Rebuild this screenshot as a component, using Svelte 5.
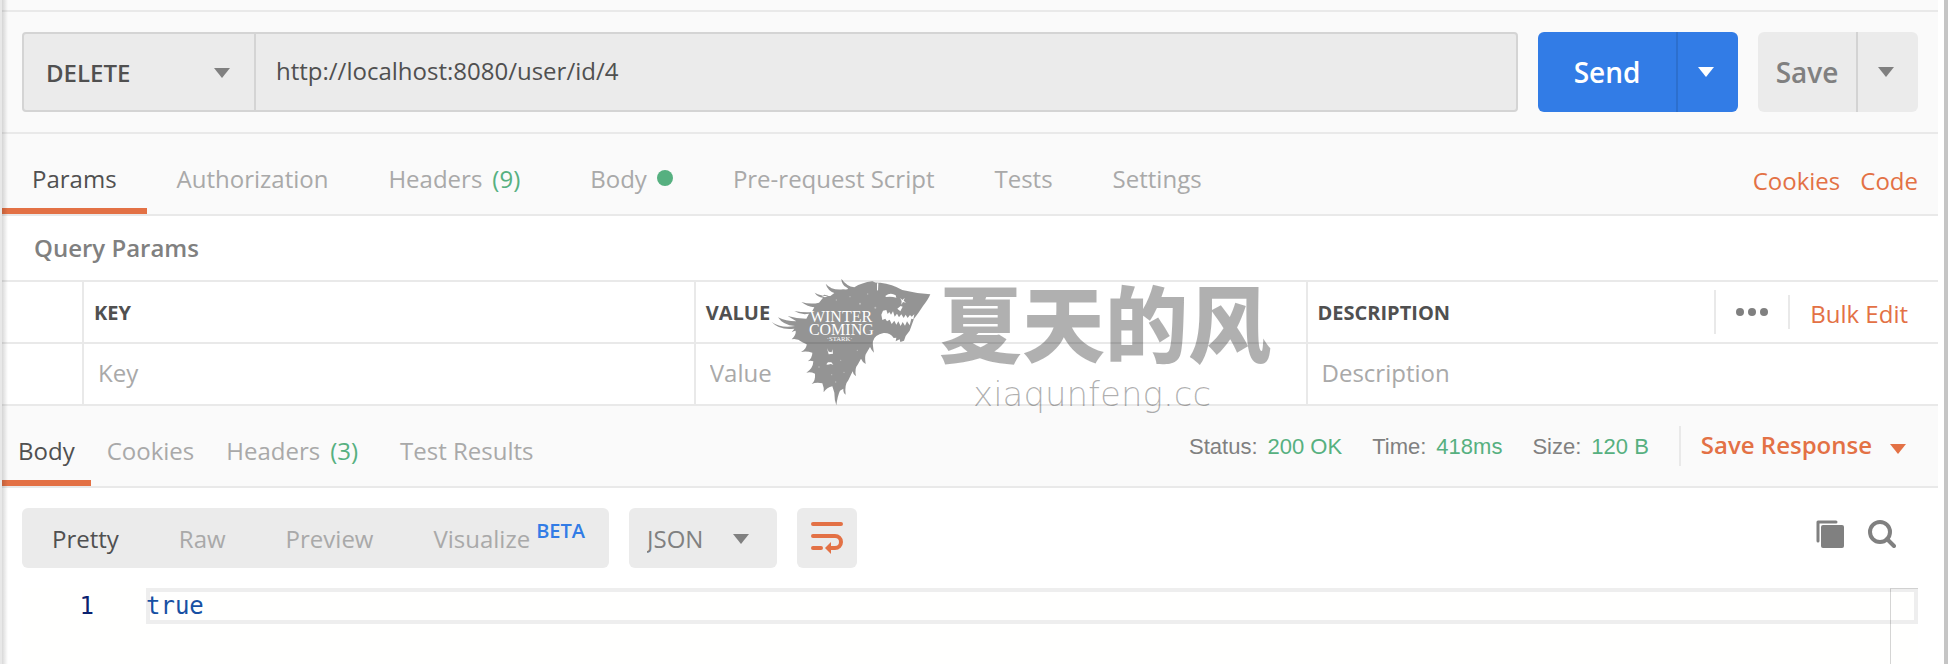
<script lang="ts">
  type Tab = { name: string; count?: number; dot?: boolean };

  const requestTabs: Tab[] = [
    { name: 'Params' },
    { name: 'Authorization' },
    { name: 'Headers', count: 9 },
    { name: 'Body', dot: true },
    { name: 'Pre-request Script' },
    { name: 'Tests' },
    { name: 'Settings' }
  ];

  const responseTabs: Tab[] = [
    { name: 'Body' },
    { name: 'Cookies' },
    { name: 'Headers', count: 3 },
    { name: 'Test Results' }
  ];

  const stats = [
    { label: 'Status:', value: '200 OK' },
    { label: 'Time:', value: '418ms' },
    { label: 'Size:', value: '120 B' }
  ];

  const views = ['Pretty', 'Raw', 'Preview', 'Visualize'];
  const methods = ['GET', 'POST', 'PUT', 'PATCH', 'DELETE'];
  const formats = ['JSON', 'XML', 'HTML', 'Text'];

  let method = $state('DELETE');
  let url = $state('http://localhost:8080/user/id/4');
  let format = $state('JSON');
  let requestTab = $state('Params');
  let responseTab = $state('Body');
  let view = $state('Pretty');
</script>

{#snippet caret()}
  <svg class="caret" width="16" height="10" viewBox="0 0 16 10" aria-hidden="true">
    <path d="M0 0h16L8 10z" fill="currentColor" />
  </svg>
{/snippet}

{#snippet tabLabel(tab: Tab)}
  {tab.name}
  {#if tab.count}<span class="count">({tab.count})</span>{/if}
  {#if tab.dot}<span class="dot"></span>{/if}
{/snippet}

<main class="pane">
  <form class="request-bar" onsubmit={(e) => e.preventDefault()}>
    <div class="url-group">
      <div class="select-box method">
        <select bind:value={method} aria-label="Method">
          {#each methods as m}<option>{m}</option>{/each}
        </select>
        {@render caret()}
      </div>
      <input class="url" type="text" bind:value={url} aria-label="Request URL" spellcheck="false" />
    </div>
    <div class="split send">
      <button class="main" type="submit">Send</button>
      <button class="more" type="button" aria-label="Send options">{@render caret()}</button>
    </div>
    <div class="split save">
      <button class="main" type="button">Save</button>
      <button class="more" type="button" aria-label="Save options">{@render caret()}</button>
    </div>
  </form>

  <div class="tab-bar request-tabs">
    <nav class="tabs">
      {#each requestTabs as tab}
        <button class="tab" class:active={requestTab === tab.name} onclick={() => (requestTab = tab.name)}>
          {@render tabLabel(tab)}
        </button>
      {/each}
    </nav>
    <div class="links">
      <a href="#cookies">Cookies</a>
      <a href="#code">Code</a>
    </div>
  </div>

  <section class="params">
    <h2>Query Params</h2>
    <table>
      <colgroup>
        <col class="col-check" />
        <col class="col-field" />
        <col class="col-field" />
        <col />
      </colgroup>
      <thead>
        <tr>
          <th></th>
          <th>KEY</th>
          <th>VALUE</th>
          <th>
            <div class="description-head">
              <span>DESCRIPTION</span>
              <button class="dots" aria-label="More columns">
                <svg width="32" height="10" viewBox="1 0 32 10" fill="#808080" aria-hidden="true">
                  <circle cx="5" cy="5" r="4" />
                  <circle cx="17" cy="5" r="4" />
                  <circle cx="29" cy="5" r="4" />
                </svg>
              </button>
              <a href="#bulk">Bulk Edit</a>
            </div>
          </th>
        </tr>
      </thead>
      <tbody>
        <tr>
          <td></td>
          <td><input type="text" placeholder="Key" aria-label="Key" /></td>
          <td><input type="text" placeholder="Value" aria-label="Value" /></td>
          <td><input type="text" placeholder="Description" aria-label="Description" /></td>
        </tr>
      </tbody>
    </table>
  </section>

  <div class="tab-bar response-tabs">
    <nav class="tabs">
      {#each responseTabs as tab}
        <button class="tab" class:active={responseTab === tab.name} onclick={() => (responseTab = tab.name)}>
          {@render tabLabel(tab)}
        </button>
      {/each}
    </nav>
    <div class="stats">
      {#each stats as stat}
        <span class="stat">{stat.label}<b>{stat.value}</b></span>
      {/each}
    </div>
    <button class="save-response">Save Response {@render caret()}</button>
  </div>

  <div class="toolbar">
    <div class="segments">
      {#each views as v}
        <button class:active={view === v} onclick={() => (view = v)}>
          {v}{#if v === 'Visualize'}<span class="beta">BETA</span>{/if}
        </button>
      {/each}
    </div>
    <div class="select-box format">
      <select bind:value={format} aria-label="Format">
        {#each formats as f}<option>{f}</option>{/each}
      </select>
      {@render caret()}
    </div>
    <button class="wrap" aria-label="Wrap lines">
      <svg width="32" height="32" viewBox="0 0 32 32" fill="none" stroke="#e37145" stroke-width="4" stroke-linecap="round">
        <path d="M2 2h28M2 14h22a6 6 0 0 1 0 12h-4M2 26h8" />
        <path d="M14 26l6-6v12z" fill="#e37145" stroke="none" />
      </svg>
    </button>
    <div class="tools">
      <button aria-label="Copy response">
        <svg width="28" height="28" viewBox="0 0 28 28" aria-hidden="true">
          <path d="M2 21V2h18" fill="none" stroke="#808080" stroke-width="3" stroke-linecap="round" stroke-linejoin="round" />
          <rect x="5" y="5" width="23" height="23" rx="2" fill="#808080" />
        </svg>
      </button>
      <button aria-label="Search response">
        <svg width="28" height="28" viewBox="0 0 28 28" fill="none" stroke="#808080" aria-hidden="true">
          <circle cx="12" cy="12" r="10" stroke-width="4" />
          <path d="M19 19l7 7" stroke-width="4" stroke-linecap="round" />
        </svg>
      </button>
    </div>
  </div>

  <div class="editor">
    <span class="line-number">1</span>
    <code>true</code>
    <div class="ruler"></div>
  </div>

  <div class="watermark">
    <svg class="wolf" width="160" height="128" viewBox="36 38 480 384" aria-hidden="true">
      <path
        fill="#000"
        fill-opacity="0.42"
        fill-rule="evenodd"
        d="M38 170Q66 190 108 182Q72 180 57 156Q80 168 112 168L86 152Q112 160 142 160L150 145Q126 150 106 137Q134 142 158 140L166 126Q146 124 127 110Q155 118 180 112L192 97Q176 96 167 82Q186 93 214 92L226 83Q206 76 200 55Q218 76 252 72Q276 74 262 66Q248 58 247 40Q262 62 286 66Q308 52 340 48Q352 54 364 52Q400 56 430 74Q470 84 514 87Q508 102 492 122L478 143L465 160L458 180L452 196L440 212L435 226L424 230L422 222L410 228L412 217L404 218Q394 202 374 203Q346 208 342 228Q340 236 345 262Q338 256 333 245L322 264Q316 270 320 296Q310 290 306 280L296 298Q286 308 291 333Q282 328 281 318L268 345Q256 358 260 388Q252 382 253 370L243 376Q236 390 232 420Q226 404 226 382L220 363Q204 366 194 381Q196 368 190 354Q172 350 158 356Q170 346 168 325Q154 318 142 322Q162 310 163 288Q154 284 146 288Q160 278 160 262Q142 256 126 260Q144 250 143 237L130 231Q114 218 98 222Q112 208 110 196Q104 196 98 201L106 190Q62 196 38 170Z
        M367 148L372 136L382 134L386 146L391 140L396 148L402 138L407 154L414 145L420 156L427 147L434 158L440 148L446 158L453 149L458 154L466 147L463 162L457 160L452 180L444 168L438 181L431 170L425 182L418 168L412 178L406 166L398 176L392 163L384 168L379 160L370 164Z
        M379 92Q394 80 410 90L412 97Q396 92 381 95Z
        M424 98L430 104L437 98L434 106L441 112L432 110L427 118L428 108Z
        M204 249L209 259L218 261L220 252L222 265L209 267Z
        M202 297L207 291L217 291L223 298L215 296L206 298Z
        M354 54L358 54L357 76L354 74Z
        M415 130L425 122L431 124L424 138Z
        M188 92L196 88L208 91L198 96Z"
      />
      <g fill="#fff" fill-opacity="0.4">
        <circle cx="232" cy="104" r="2" />
        <circle cx="273" cy="94" r="2" />
        <circle cx="303" cy="115" r="3" />
        <circle cx="349" cy="127" r="3" />
        <circle cx="326" cy="86" r="2" />
        <circle cx="180" cy="305" r="2" />
        <circle cx="245" cy="285" r="2" />
        <circle cx="218" cy="328" r="2" />
        <circle cx="255" cy="321" r="2" />
        <circle cx="295" cy="255" r="2" />
        <circle cx="230" cy="350" r="2" />
      </g>
      <g fill="#fff" font-family="'Liberation Serif', serif" text-anchor="middle">
        <text x="246" y="170" font-size="48">WINTER</text>
        <text x="247" y="208" font-size="48">COMING</text>
        <text x="242" y="227" font-size="20">·STARK·</text>
      </g>
    </svg>
    <div class="mark-text">
      <span class="mark-title">夏天的风</span>
      <span class="mark-url">xiaqunfeng.cc</span>
    </div>
  </div>
</main>

<style>
  :global(body) {
    margin: 0;
    background: #fff;
  }

  .pane {
    --line: #e9e9e9;
    --text: #505050;
    --muted: #a9a9a9;
    --gray: #808080;
    --orange: #e37145;
    --green: #56b080;
    position: relative;
    display: flex;
    flex-direction: column;
    box-sizing: border-box;
    min-height: 100vh;
    padding-right: 6px;
    border-left: 2px solid #e8e8e8;
    border-right: 4px solid #c5c5c5;
    font-family: 'Open Sans', sans-serif;
    font-size: 24px;
    color: var(--text);
  }

  /* shadow cast by the sidebar */
  .pane::before {
    content: '';
    position: absolute;
    inset: 0 auto 0 0;
    z-index: 2;
    width: 6px;
    background: linear-gradient(to right, rgba(0, 0, 0, 0.15), rgba(0, 0, 0, 0));
    pointer-events: none;
  }

  button,
  input,
  select {
    margin: 0;
    padding: 0;
    border: 0;
    border-radius: 0;
    background: none;
    font: inherit;
    color: inherit;
    outline: none;
  }

  a {
    color: var(--orange);
    text-decoration: none;
  }

  .caret {
    display: block;
    flex-shrink: 0;
  }

  .request-bar {
    display: flex;
    gap: 20px;
    margin-top: 10px;
    padding: 20px;
    border-top: 2px solid var(--line);
    background: #fafafa;
    box-shadow: 0 -10px #fafafa;
  }

  .url-group {
    display: flex;
    flex: 1;
    box-sizing: border-box;
    height: 80px;
    border: 2px solid #d4d4d4;
    border-radius: 4px;
    background: #ebebeb;
  }

  .select-box {
    position: relative;
    display: flex;
  }

  .select-box select {
    width: 100%;
    appearance: none;
  }

  .select-box .caret {
    position: absolute;
    top: calc(50% - 4px);
    color: var(--gray);
    pointer-events: none;
  }

  .method {
    width: 230px;
    border-right: 2px solid #d4d4d4;
    font-weight: 600;
  }

  .method select {
    padding-left: 22px;
  }

  .method .caret {
    right: 24px;
  }

  .url {
    flex: 1;
    min-width: 0;
    padding: 0 20px 4px;
  }

  .split {
    display: flex;
    border-radius: 6px;
    overflow: hidden;
    font-size: 28px;
    font-weight: 600;
  }

  .more {
    display: flex;
    align-items: center;
    justify-content: center;
    width: 62px;
    padding-right: 4px;
    border-left: 2px solid rgba(0, 0, 0, 0.1);
  }

  .send {
    background: #327ce6;
    color: #fff;
  }

  .send .main {
    width: 138px;
  }

  .save {
    background: #ebebeb;
    color: var(--gray);
  }

  .save .main {
    width: 98px;
  }

  .tab-bar {
    display: flex;
    align-items: center;
    height: 80px;
    border-top: 2px solid var(--line);
    border-bottom: 2px solid var(--line);
    background: #fafafa;
  }

  .tabs {
    display: flex;
    flex: 1;
    align-self: stretch;
  }

  .tab {
    display: flex;
    align-items: center;
    gap: 10px;
    padding: 8px 30px 0;
    color: var(--muted);
    white-space: nowrap;
  }

  .tab.active {
    color: var(--text);
    box-shadow: inset 0 -6px var(--orange);
  }

  .response-tabs .tab {
    padding: 8px 16px 0;
  }

  .count {
    margin-right: 10px;
    color: var(--green);
  }

  .dot {
    width: 16px;
    height: 16px;
    border-radius: 50%;
    background: var(--green);
  }

  .links {
    display: flex;
    gap: 20px;
    padding: 12px 20px 0 0;
  }

  h2 {
    margin: 0;
    padding-left: 32px;
    font-size: 24px;
    font-weight: 600;
    line-height: 64px;
    color: var(--gray);
  }

  table {
    width: 100%;
    border-spacing: 0;
    table-layout: fixed;
  }

  .col-check {
    width: 80px;
  }

  .col-field {
    width: 31.6%;
  }

  th,
  td {
    box-sizing: border-box;
    height: 62px;
    padding: 0;
    border-top: 2px solid var(--line);
    border-left: 2px solid var(--line);
    text-align: left;
  }

  th:first-child,
  td:first-child {
    border-left: 0;
  }

  th {
    padding-left: 10px;
    font-size: 20px;
    font-weight: 700;
  }

  td input {
    display: block;
    box-sizing: border-box;
    width: 100%;
    padding: 0 14px 4px;
  }

  ::placeholder {
    color: var(--muted);
    opacity: 1;
  }

  .description-head {
    display: flex;
    align-items: center;
    padding-right: 30px;
  }

  .description-head span {
    flex: 1;
  }

  .dots {
    display: flex;
    align-items: center;
    height: 44px;
    padding: 0 20px;
    border-left: 2px solid var(--line);
  }

  .description-head a {
    padding: 4px 0 0 20px;
    border-left: 2px solid var(--line);
    font-size: 24px;
    font-weight: 400;
    line-height: 30px;
  }

  .stats {
    display: flex;
    gap: 30px;
    padding-top: 2px;
    font-family: 'Liberation Sans', sans-serif;
    font-size: 22px;
    color: var(--gray);
  }

  .stat b {
    margin-left: 10px;
    font-weight: 400;
    color: var(--green);
  }

  .save-response {
    display: flex;
    align-items: center;
    gap: 18px;
    box-sizing: border-box;
    height: 40px;
    margin-left: 30px;
    padding: 0 32px 4px 20px;
    border-left: 2px solid var(--line);
    font-weight: 600;
    color: var(--orange);
  }

  .save-response :global(.caret) {
    margin-top: 10px;
  }

  .toolbar {
    display: flex;
    gap: 20px;
    height: 60px;
    padding: 20px;
  }

  .segments {
    display: flex;
    border-radius: 6px;
    background: #ebebeb;
    color: var(--muted);
  }

  .segments button {
    display: flex;
    align-items: center;
    padding: 0 30px;
  }

  .segments button:last-child {
    padding-right: 24px;
  }

  .segments .active {
    color: var(--text);
  }

  .beta {
    margin: 0 0 16px 6px;
    font-size: 20px;
    font-weight: 600;
    color: #327ce6;
  }

  .format {
    width: 148px;
    border-radius: 6px;
    background: #ebebeb;
    color: var(--gray);
  }

  .format select {
    padding-left: 18px;
  }

  .format .caret {
    right: 28px;
  }

  .wrap {
    display: flex;
    align-items: center;
    justify-content: center;
    width: 60px;
    border-radius: 6px;
    background: #ebebeb;
  }

  .tools {
    display: flex;
    align-items: flex-start;
    gap: 24px;
    margin-left: auto;
    padding: 12px 22px 0 0;
  }

  .tools button,
  .tools svg {
    display: block;
  }

  .editor {
    position: relative;
    display: flex;
    flex: 1;
    align-items: flex-start;
    margin: 0 20px;
    background: #fffffe;
    font-family: 'DejaVu Sans Mono', monospace;
    line-height: 36px;
  }

  .line-number {
    width: 72px;
    padding-right: 52px;
    text-align: right;
    color: #0b216f;
  }

  code {
    flex: 1;
    font: inherit;
    color: #1750a3;
    box-shadow: inset 0 0 0 4px #eee;
  }

  .ruler {
    position: absolute;
    inset: 0 0 0 auto;
    width: 27px;
    border-top: 1px solid rgba(0, 0, 0, 0.12);
    border-left: 1px solid rgba(0, 0, 0, 0.16);
  }

  .watermark {
    position: absolute;
    top: 278px;
    left: 39.6%;
    display: flex;
    gap: 8px;
    pointer-events: none;
  }

  .mark-text {
    display: flex;
    flex-direction: column;
    gap: 12px;
    white-space: nowrap;
    color: rgba(0, 0, 0, 0.31);
  }

  .mark-title {
    font-family: 'Noto Sans CJK SC', sans-serif;
    font-size: 83px;
    font-weight: 900;
    line-height: 84px;
  }

  .mark-url {
    padding-left: 34px;
    font-family: 'DejaVu Sans', sans-serif;
    font-size: 34px;
    font-weight: 200;
    line-height: 40px;
  }
</style>
